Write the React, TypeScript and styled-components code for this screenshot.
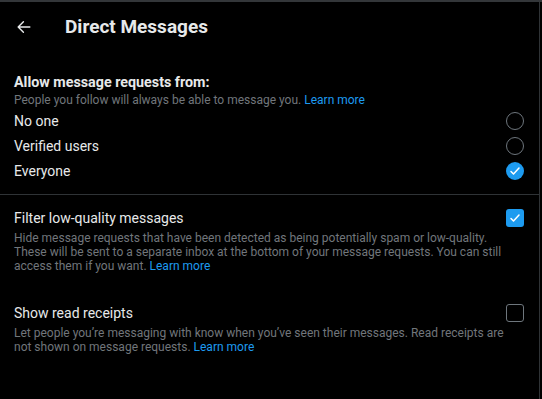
import React from "react";
import styled, { createGlobalStyle } from "styled-components";

const Global = createGlobalStyle`
  html, body { margin: 0; padding: 0; background: #000; }
  body { font-family: Roboto, "Noto Sans", sans-serif; -webkit-font-smoothing: antialiased; }
`;

const Frame = styled.div`
  width: 542px;
  height: 399px;
  background: #000;
  box-sizing: border-box;
  border-top: 2px solid #333639;
  overflow: hidden;
`;

const Panel = styled.div`
  width: 539px;
  height: 100%;
  border-right: 1px solid #2f3336;
  box-sizing: content-box;
`;

const Header = styled.div`
  display: flex;
  align-items: center;
  height: 49px;
  padding-left: 16px;
`;

const BackButton = styled.div`
  width: 16px;
  height: 16px;
  display: flex;
  align-items: center;
  justify-content: center;
  margin-right: 33px;
  color: #e7e9ea;
`;

const Title = styled.h1`
  margin: 0;
  font-size: 19px;
  font-weight: 700;
  color: #e7e9ea;
`;

const Section = styled.div<{ $top?: number }>`
  padding: ${(p) => p.$top ?? 0}px 14px 0 14px;
`;

const SectionTitle = styled.div`
  font-size: 14.3px;
  font-weight: 700;
  color: #e7e9ea;
  line-height: 20px;
`;

const Sub = styled.div`
  font-size: 12px;
  color: #71767b;
  line-height: 16px;
`;

const Link = styled.span`
  display: inline-block;
  line-height: inherit;
  color: #1d9bf0;
`;

const OptionRow = styled.div`
  display: flex;
  align-items: center;
  justify-content: space-between;
  height: 25px;
  font-size: 14px;
  color: #e7e9ea;
`;

const Radio = styled.div<{ $checked?: boolean }>`
  width: 18px;
  height: 18px;
  border-radius: 50%;
  box-sizing: border-box;
  border: ${(p) => (p.$checked ? "none" : "1.5px solid #6e767d")};
  background: ${(p) => (p.$checked ? "#1d9bf0" : "transparent")};
  display: flex;
  align-items: center;
  justify-content: center;
  margin-right: 1px;
`;

const Divider = styled.div`
  height: 1px;
  background: #2f3336;
  margin-top: 11px;
`;

const ToggleRow = styled.div`
  display: flex;
  align-items: center;
  justify-content: space-between;
  font-size: 14px;
  color: #e7e9ea;
  height: 20px;
`;

const Box = styled.div<{ $checked?: boolean }>`
  width: 18px;
  height: 18px;
  border-radius: 3px;
  box-sizing: border-box;
  border: ${(p) => (p.$checked ? "none" : "1.5px solid #6e767d")};
  background: ${(p) => (p.$checked ? "#1d9bf0" : "transparent")};
  display: flex;
  align-items: center;
  justify-content: center;
  margin-right: 1px;
`;

const Desc = styled.div`
  font-size: 12px;
  color: #71767b;
  line-height: 14px;
  margin-top: 3px;
  padding-right: 20px;
`;

const Check = () => (
  <svg width="12" height="12" viewBox="0 0 24 24" fill="none">
    <path d="M4 13l5 5L20 6" stroke="#fff" strokeWidth="3" strokeLinecap="round" strokeLinejoin="round" />
  </svg>
);

const Arrow = () => (
  <svg width="14" height="14" viewBox="0 0 24 24" fill="none">
    <path d="M22 12H3M11 3l-9 9 9 9" stroke="currentColor" strokeWidth="2.4" strokeLinecap="round" strokeLinejoin="round" />
  </svg>
);

export default function App() {
  return (
    <Frame>
      <Global />
      <Panel>
        <Header>
          <BackButton>
            <Arrow />
          </BackButton>
          <Title>Direct Messages</Title>
        </Header>
        <Section $top={21}>
          <SectionTitle>Allow message requests from:</SectionTitle>
          <Sub>
            People you follow will always be able to message you. <Link>Learn more</Link>
          </Sub>
          <OptionRow>
            No one
            <Radio />
          </OptionRow>
          <OptionRow>
            Verified users
            <Radio />
          </OptionRow>
          <OptionRow>
            Everyone
            <Radio $checked>
              <Check />
            </Radio>
          </OptionRow>
        </Section>
        <Divider />
        <Section $top={13}>
          <ToggleRow>
            Filter low-quality messages
            <Box $checked>
              <Check />
            </Box>
          </ToggleRow>
          <Desc>
            Hide message requests that have been detected as being potentially spam or low-quality. These will be sent to a separate inbox at the bottom of your message requests. You can still access them if you want. <Link>Learn more</Link>
          </Desc>
        </Section>
        <Section $top={30}>
          <ToggleRow>
            Show read receipts
            <Box />
          </ToggleRow>
          <Desc>
            Let people you’re messaging with know when you’ve seen their messages. Read receipts are not shown on message requests. <Link>Learn more</Link>
          </Desc>
        </Section>
      </Panel>
    </Frame>
  );
}
